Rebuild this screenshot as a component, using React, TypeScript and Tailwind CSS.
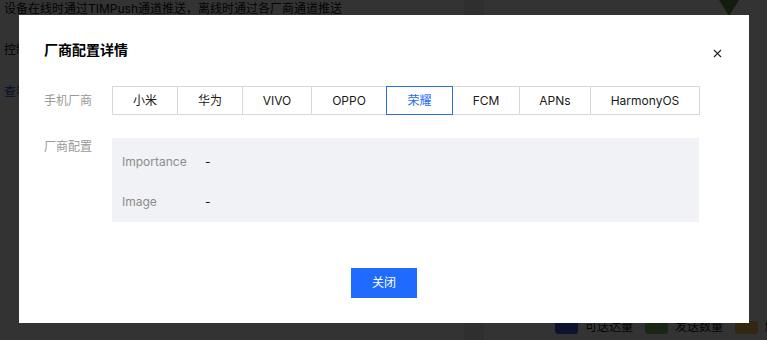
import { X } from "lucide-react";

const VENDORS = [
  { label: "小米", w: "w-[66px]" },
  { label: "华为", w: "w-[66px]" },
  { label: "VIVO", w: "w-[70px]" },
  { label: "OPPO", w: "w-[76px]" },
  { label: "荣耀", w: "w-[67px]" },
  { label: "FCM", w: "w-[68px]" },
  { label: "APNs", w: "w-[72px]" },
  { label: "HarmonyOS", w: "w-[110px]" },
];

const ACTIVE = "荣耀";

const FIELDS = [
  { key: "Importance", value: "-" },
  { key: "Image", value: "-" },
];

export default function App() {
  return (
    <div
      className="relative w-[767px] h-[340px] overflow-hidden bg-white text-[12px]"
      style={{ fontFamily: '"Inter", "Noto Sans CJK SC", sans-serif' }}
    >
      {/* page underneath */}
      <div className="flex h-full">
        <div className="w-[464px] flex flex-col pl-[4px]">
          <div className="h-[18px] leading-[18px] text-[#111]">
            设备在线时通过TIMPush通道推送，离线时通过各厂商通道推送
          </div>
          <div className="mt-[23px] h-[18px] leading-[18px] text-[#111]">控制</div>
          <div className="mt-[24px] h-[18px] leading-[18px] text-[#1f4fd1]">查看</div>
        </div>
        <div className="w-[20px] bg-[#eaeaea]" />
        <div className="flex-1 flex flex-col items-end justify-between">
          <div className="mr-[28px] w-0 h-0 border-l-[10px] border-r-[10px] border-t-[16px] border-l-transparent border-r-transparent border-t-[#5c8a4a]" />
          <div className="flex items-center gap-[7px] mb-[4px] -mr-[22px] text-[#111]">
            <span className="w-[23px] h-[13px] rounded-[3px] bg-[#4660e0]" />
            <span className="mr-[5px]">可送达量</span>
            <span className="w-[23px] h-[13px] rounded-[3px] bg-[#7fc46a]" />
            <span className="mr-[5px]">发送数量</span>
            <span className="w-[23px] h-[13px] rounded-[3px] bg-[#f5c060]" />
            <span>触达</span>
          </div>
        </div>
      </div>

      {/* mask */}
      <div className="absolute inset-0 bg-black/80" />

      {/* dialog */}
      <div className="absolute left-[19px] top-[15px] w-[730px] h-[308px] bg-white pt-[26px] px-[25px] pb-[25px] flex flex-col">
        <div className="h-[18px] leading-[18px] text-[14px] font-semibold text-[#000]">厂商配置详情</div>
        <button className="absolute right-[25px] top-[32px] text-[#222]">
          <X size={13} strokeWidth={2} />
        </button>

        <div className="mt-[27px] flex items-center">
          <div className="w-[68px] text-[#999]">手机厂商</div>
          <div className="flex">
            {VENDORS.map((v, i) => {
              const active = v.label === ACTIVE;
              return (
                <div
                  key={v.label}
                  className={`${v.w} h-[29px] flex items-center justify-center border ${
                    i > 0 ? "-ml-px" : ""
                  } ${active ? "relative z-10 border-[#2b6cf5] text-[#2b6cf5]" : "border-[#d3d8e1] text-[#1a1a1a]"}`}
                >
                  {v.label}
                </div>
              );
            })}
          </div>
        </div>

        <div className="mt-[23px] flex items-start">
          <div className="w-[68px] h-[18px] leading-[18px] text-[#999]">厂商配置</div>
          <div className="w-[587px] h-[84px] bg-[#f1f2f5] pt-[4px] pl-[10px] flex flex-col">
            {FIELDS.map((f) => (
              <div key={f.key} className="h-[40px] flex items-center">
                <div className="w-[83px] text-[#8c8c8c]">{f.key}</div>
                <div className="text-[#1a1a1a]">{f.value}</div>
              </div>
            ))}
          </div>
        </div>

        <div className="mt-auto flex justify-center">
          <button className="w-[66px] h-[30px] bg-[#1f6bff] text-white">关闭</button>
        </div>
      </div>
    </div>
  );
}
